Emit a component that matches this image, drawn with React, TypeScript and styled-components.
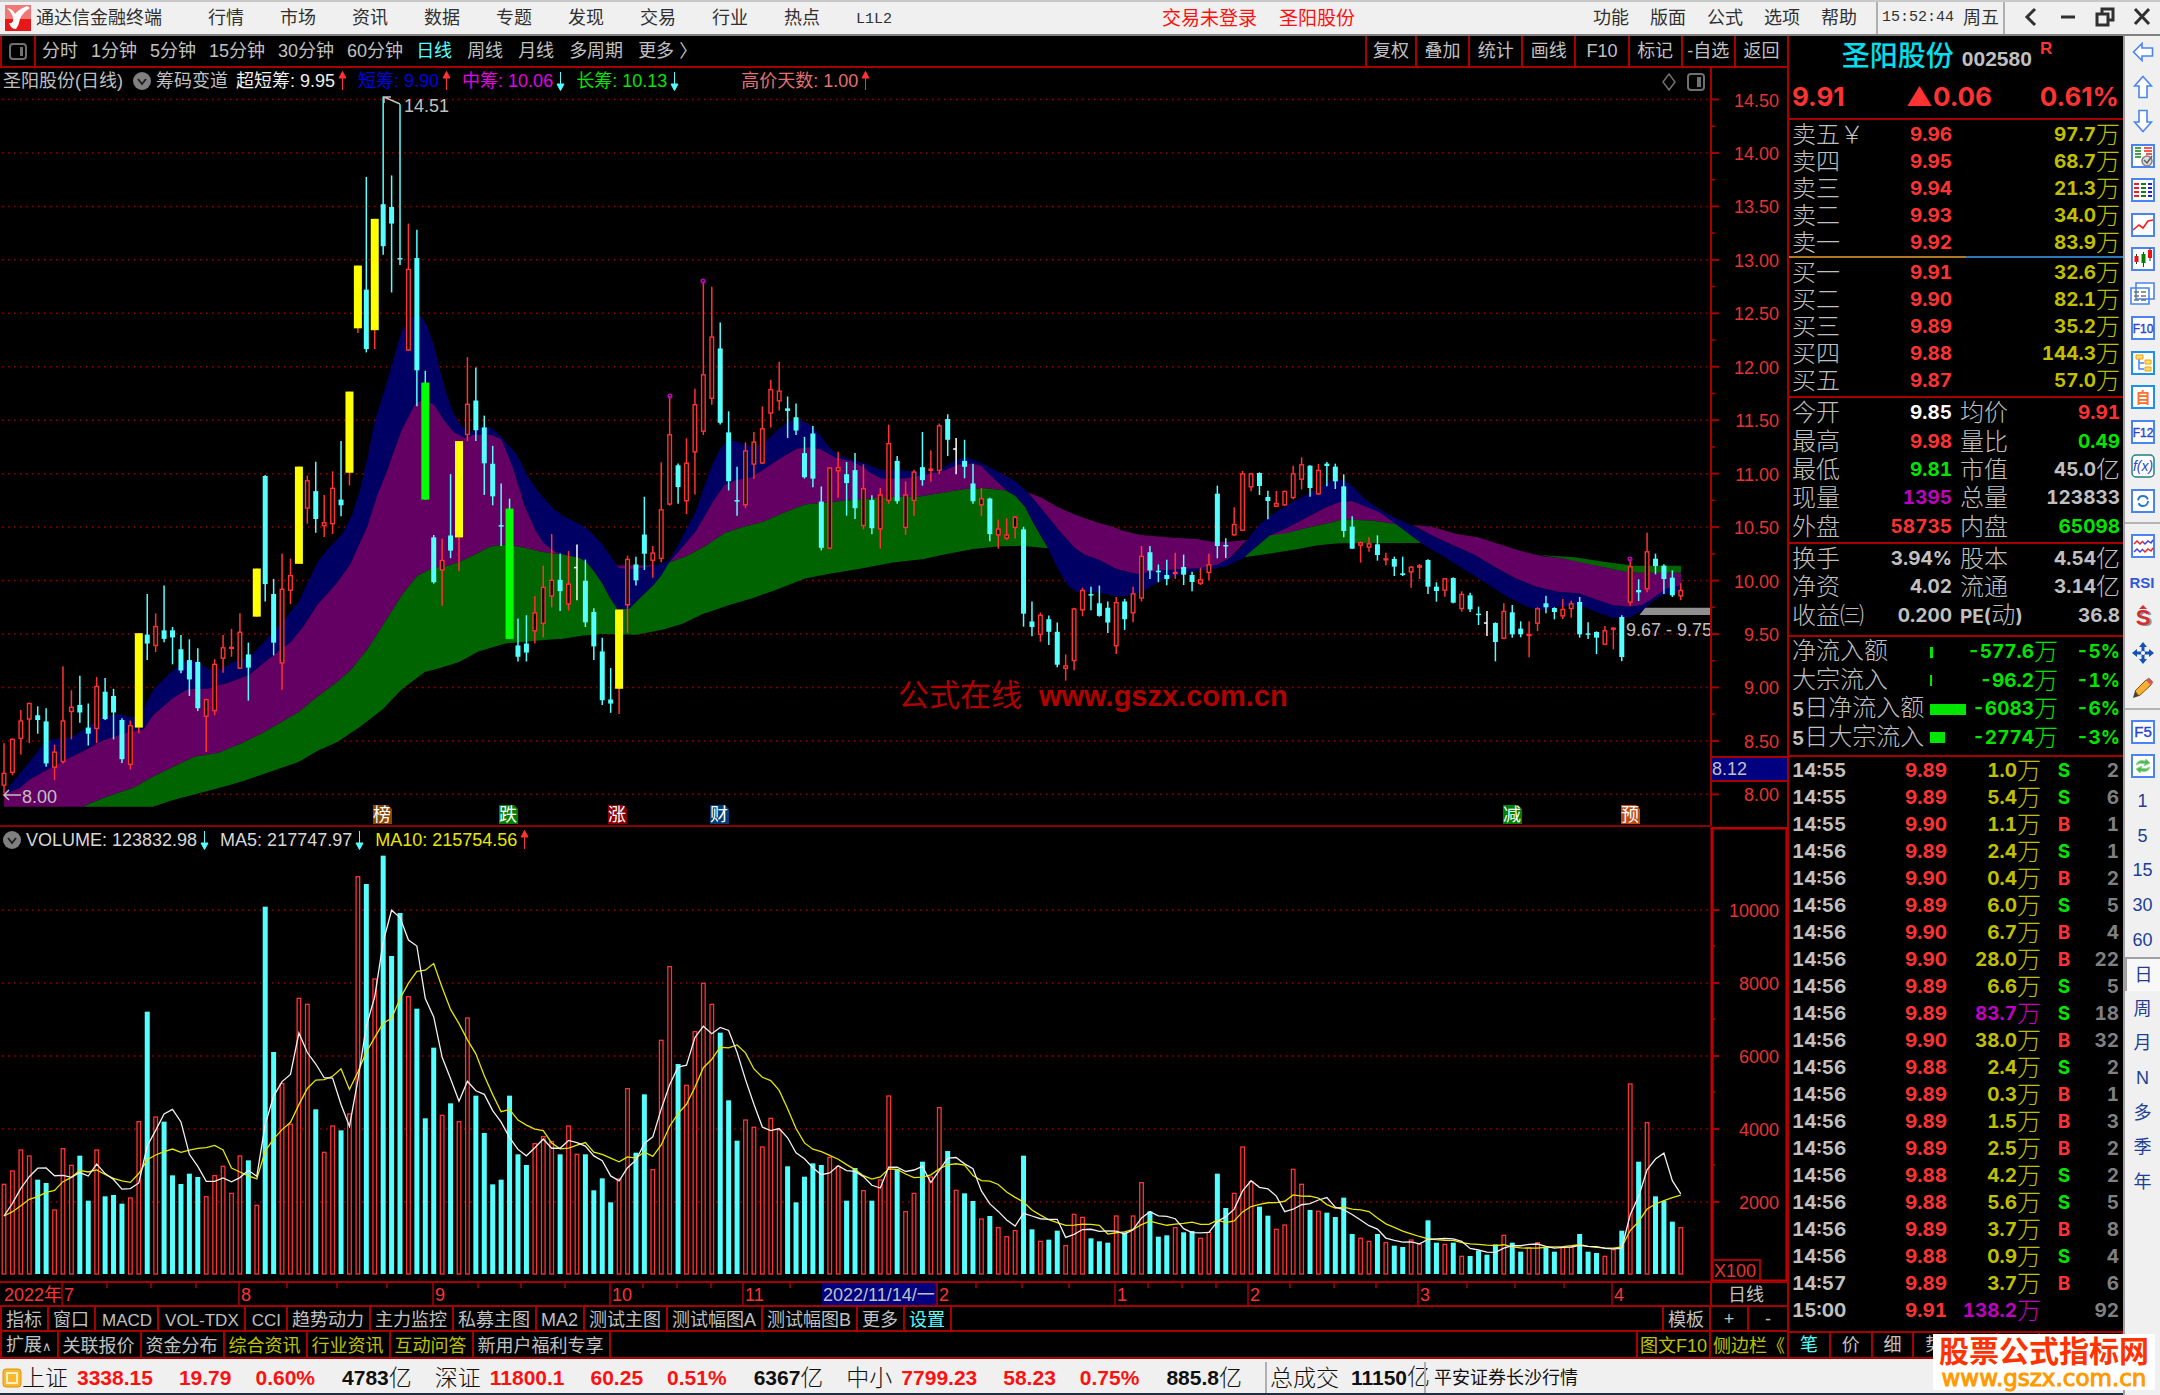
import React from 'react';
import styled, { createGlobalStyle } from 'styled-components';

const C = {
  line: '#a80000',
  grid: '#960000',
  red: '#ff3232',
  cyan: '#54ffff',
  green: '#00e600',
  text: '#c0c0c0',
  yellow: '#c0c000',
  magenta: '#c000c0',
  chrome: '#f0f0f0',
};
const SANS = '"Liberation Sans", "Noto Sans CJK SC", sans-serif';
const NUM = 'Inter, "Noto Sans CJK SC", sans-serif';

const Global = createGlobalStyle`
  *, *::before, *::after { box-sizing: border-box; }
  body { margin: 0; background: #000; font: 18px/1 ${SANS}; color: ${C.text}; }
  button { font: inherit; color: inherit; background: none; border: 0; padding: 0; margin: 0; cursor: pointer; white-space: nowrap; }
  h1 { margin: 0; }
`;

/* ---------- page frame ---------- */
const Page = styled.div`display: flex; flex-direction: column; min-height: 100vh; min-width: 1700px;`;
const Body = styled.div`display: flex; flex: 1;`;
const Desk = styled.div`flex: 1; min-width: 0; display: flex; flex-direction: column;`;
const Main = styled.div`display: grid; grid-template-columns: minmax(0, 1fr) 336px; flex: 1;`;
const Charts = styled.main`display: flex; flex-direction: column; min-width: 0;`;

/* ---------- menu bar ---------- */
const MenuBar = styled.header`
  display: flex; align-items: center; height: 36px; padding-left: 5px;
  background: ${C.chrome}; color: #303030; border-top: 2px solid #c8c8c8; border-bottom: 2px solid #808080;
`;
const AppName = styled.span`margin: 0 46px 0 5px;`;
const Menu = styled.nav<{ $gap: number }>`display: flex; gap: ${p => p.$gap}px;`;
const Mono = styled.span`font: 15px/18px "Liberation Mono", monospace;`;
const Notices = styled.div`flex: 1; display: flex; justify-content: center; gap: 22px; color: #ff1010; font-size: 19px; padding-left: 32px;`;
const Clock = styled.time`
  display: flex; align-items: center; gap: 9px; height: 32px; margin-left: 19px; padding: 0 4px;
  border-left: 2px solid #b0b0b0; border-right: 2px solid #b0b0b0;
`;
const WinButtons = styled.div`display: flex; width: 155px; justify-content: space-between; padding: 0 8px 0 16px;`;

/* ---------- toolbar ---------- */
const Toolbar = styled.div`display: flex; height: 32px; border-bottom: 2px solid ${C.line}; border-left: 2px solid ${C.line};`;
const PaneToggle = styled.button`width: 34px; border-right: 2px solid ${C.line}; display: grid; place-items: center;`;
const Periods = styled.div`display: flex; gap: 13px; padding-left: 6px;`;
const LongPeriods = styled(Periods)`gap: 15px; padding-left: 13px; flex: 1;`;
const Period = styled.button<{ $on?: boolean }>`color: ${p => (p.$on ? C.cyan : C.text)};`;
const Tools = styled.div`display: grid; grid-template-columns: 50px repeat(7, 1fr); width: 422px;`;
const Tool = styled.button`border-left: 2px solid ${C.line};`;

/* ---------- charts ---------- */
const Pane = styled.section`position: relative;`;
const Plot = styled.svg`display: block; width: 100%; height: auto; font: 18px ${SANS};`;
const Legend = styled.div`position: absolute; left: 3px; top: 2px; height: 22px; display: flex; align-items: center; white-space: pre;`;
const LegendItem = styled.span<{ $c: string; $gap: number }>`
  color: ${p => p.$c}; display: flex; align-items: center; gap: 3px; margin-right: ${p => p.$gap}px;
`;

/* ---------- bottom tabs ---------- */
const TabRow = styled.div<{ $h: number }>`display: flex; height: ${p => p.$h}px; border-bottom: 2px solid ${C.line}; border-left: 2px solid ${C.line};`;
const Tab = styled.button<{ $c?: string }>`
  padding: 2px 5px 0 4px; color: ${p => p.$c || C.text}; border-right: 2px solid ${C.line};
`;
const Latin = styled.span`font-size: 17px; padding-left: 2px;`;
const Caret = styled.span`font: 13px/18px "DejaVu Sans", sans-serif;`;
const Spacer = styled.div`flex: 1; border-right: 2px solid ${C.line};`;
const ZoomIn = styled(Tab)`width: 38px; padding: 0;`;
const ZoomOut = styled(ZoomIn)`border-right: 0;`;
const Info = styled(Tab)`padding: 2px 2px 0;`;
const SideTab = styled(Tab)`width: 76px; padding: 2px 0 0; border-right: 0;`;

/* ---------- quote panel ---------- */
const Panel = styled.aside`
  border-left: 2px solid ${C.line}; display: flex; flex-direction: column;
  font: bold 19px/20px ${NUM}; font-variant-numeric: tabular-nums;
`;
const Title = styled.div`display: flex; justify-content: center; align-items: center; height: 42px; gap: 8px; padding: 0 22px 0 4px;`;
const Name = styled.h1`font: 500 28px/30px ${SANS}; color: #00e0f0;`;
const Code = styled.span`font: bold 21px/24px ${SANS}; padding-top: 4px;`;
const Flag = styled.sup`font: bold 17px/18px ${SANS}; color: ${C.red}; align-self: flex-start; padding-top: 4px; vertical-align: baseline;`;
const Last = styled.div`
  display: grid; grid-template-columns: 1fr auto 127px; align-items: center; height: 42px; padding: 0 4px 2px 3px;
  font: bold 26px/30px ${NUM}; color: ${C.red}; border-bottom: 2px solid ${C.line};
`;
const Percent = styled.span`text-align: right;`;
const Section = styled.section<{ $h: number; $foot: number }>`
  height: ${p => p.$h}px; padding: 1px 3px ${p => p.$foot}px; display: grid; grid-auto-rows: 1fr; border-bottom: 2px solid ${C.line};
`;
const Side = styled.section`padding: 1px 3px 0; display: grid; grid-auto-rows: 27px;`;
const Bids = styled(Side)`padding-bottom: 2px; border-bottom: 2px solid ${C.line};`;
const Ratio = styled.div`height: 2px; background: linear-gradient(90deg, #b07820 53%, #2f78b8 53%);`;
const QuoteRow = styled.div`display: grid; grid-template-columns: 80px 80px 1fr; align-items: center; text-align: right; white-space: nowrap;`;
const StatRow = styled.div`display: grid; grid-template-columns: 80px 80px 76px 1fr; align-items: center; text-align: right; white-space: nowrap;`;
const Label = styled.span<{ $pad?: boolean }>`font-weight: 300; font-size: 24px; line-height: 26px; text-align: left; padding-left: ${p => (p.$pad ? 8 : 0)}px;`;
const B = styled.b`font-weight: bold; font-size: 19px;`;
const Unit = styled.span`font-weight: 300; font-size: 24px; line-height: 26px;`;
const Val = styled.span<{ $c?: string; $mid?: boolean }>`
  color: ${p => p.$c || C.text}; display: flex; align-items: center; justify-content: ${p => (p.$mid ? 'center' : 'flex-end')};
`;
const FundRow = styled.div`display: grid; grid-template-columns: 138px 36px 1fr 62px; align-items: center; white-space: nowrap;`;
const FlowBar = styled.i`display: block; height: 11px; background: ${C.green};`;
const Ticks = styled.table`
  border-collapse: collapse; width: 100%; table-layout: fixed;
  td { padding: 0; height: 27px; text-align: right; white-space: nowrap; }
  td:first-child { text-align: left; padding-left: 3px; }
  td:last-child { padding-right: 4px; color: #808080; }
`;
const PanelTabs = styled.div`
  margin-top: auto; display: grid; grid-template-columns: repeat(8, 1fr); height: 28px;
  font: 18px/1 ${SANS}; border-top: 2px solid ${C.line}; border-bottom: 2px solid ${C.line};
`;
const PanelTab = styled.div<{ $on?: boolean }>`
  display: grid; place-items: center; border-right: 2px solid ${C.line}; color: ${p => (p.$on ? C.cyan : C.text)};
`;

/* ---------- status bar ---------- */
const Status = styled.footer`
  display: flex; align-items: center; height: 36px; padding: 3px 0 0 2px; background: ${C.chrome}; color: #101010;
  border-bottom: 2px solid #203040; font: bold 21px/24px ${SANS}; white-space: nowrap;
`;
const Index = styled.div`display: flex; align-items: center; margin-right: 23px;`;
const Thin = styled.span`font-weight: 300; font-size: 23px;`;
const Up = styled.span<{ $gap: number }>`color: #ff1010; margin-left: ${p => p.$gap}px;`;
const Amount = styled.span`margin-left: 27px; display: flex; align-items: center;`;
const Total = styled.div`border-left: 2px solid #b0b0b0; padding-left: 3px; display: flex; align-items: center; height: 31px; gap: 12px;`;
const Broker = styled.div`font-weight: 400; font-size: 18px; margin-left: -6px; padding-left: 8px; height: 31px; display: flex; align-items: center; border-left: 2px solid #b0b0b0;`;

/* ---------- icon strip ---------- */
const Strip = styled.nav`width: 37px; background: ${C.chrome}; border-left: 2px solid #a0a0a0; color: #1c3f94; font-size: 18px;`;
const IconGroup = styled.div<{ $h: number }>`
  height: ${p => p.$h}px; display: grid; grid-auto-rows: 1fr; justify-items: center; align-items: start; padding-bottom: 3px;
  & + & { border-top: 2px solid #b4b4b4; padding: 6px 0 0; }
`;
const IconButton = styled.button`display: grid; place-items: center; width: 35px; height: 32px;`;
const PeriodList = styled.div`display: grid; grid-template-rows: repeat(12, 1fr); height: 415px;`;
const StripText = styled.button<{ $on?: boolean }>`
  background: ${p => (p.$on ? '#f8f8f8' : 'none')}; border: 0 solid #a0a0a0; border-width: ${p => (p.$on ? '2px 0 0 2px' : '0')};
`;
const Stamp = styled.a`
  position: absolute; right: 5px; bottom: 5px; width: 222px; height: 56px; padding-top: 2px; background: #fff; text-align: center; text-decoration: none;
  font: bold 30px/32px ${SANS}; color: #ff3300; white-space: nowrap;
`;
const StampUrl = styled.span`display: block; font: 23px/20px "DejaVu Sans", sans-serif; color: #ff9a00; -webkit-text-stroke: 1px #ff9a00;`;
const Root = styled.div`position: relative;`;

/* ---------- session data ---------- */
/* Each block carries its own vertical origin and scale: y = y0 + v / k. */
type Block = { y0: number; k: number; rows: string };
const BLOCKS: Block[] = [
  { y0: 90, k: 2.119, rows: `r1384,1447,1474,1490 r1374,1375,1447,1452 r1314,1336,1375,1408 r1298,1299,1334,1384 c1306,1325,1335,1364
c1310,1338,1427,1434 r1387,1402,1436,1462 r1221,1336,1424,1427 r1272,1307,1318,1376 c1241,1303,1319,1341 c1300,1351,1364,1389
r1244,1263,1354,1384 c1246,1275,1333,1335 c1269,1284,1319,1376 c1331,1335,1418,1426 r1336,1346,1430,1440 y1151,1151,1351,1363
c1068,1154,1173,1208 r1109,1136,1178,1191 c1050,1145,1163,1170 c1138,1145,1160,1217 c1155,1185,1230,1236 c1164,1208,1249,1284
c1183,1212,1310,1316 r1290,1291,1328,1403 r1206,1216,1316,1325 r1155,1181,1205,1235 r1142,1180,1184,1201 r1109,1148,1226,1227
c1171,1196,1224,1294 y1014,1014,1116,1116 c816,818,1047,1084 c1036,1068,1171,1198 r982,1057,1215,1271 r993,1028,1061,1089
y798,798,1004,1004 r817,827,887,919 c788,850,909,938 r858,916,924,947 r808,843,920,941 c744,868,880,903 y639,639,811,838
y372,372,505,515 c184,423,549,556 y273,273,509,549 c14,242,331,349 c181,248,283,429 c30,356,359,371 r283,379,552,553
c296,356,594,670 g595,620,868,868 c943,948,1043,1046 r951,996,1018,1093 c814,944,976,992 y744,744,948,1020 r566,665,731,744
c588,658,721,744 c690,715,791,858 c754,792,861,880 c834,922,924,966 g866,887,1163,1163 c1120,1177,1201,1211 c1113,1173,1192,1211
r1072,1107,1147,1173 r1008,1053,1131,1160 r941,1038,1073,1096 c982,1038,1062,1104 r977,1046,1090,1103 w963,1012,1014,1081
c995,1040,1128,1138 c1098,1106,1179,1208` },
  { y0: 250, k: 2.703, rows: `c1048,1085,1217,1230 c1130,1215,1226,1251 y972,972,1186,1254 r826,835,960,1035 c829,850,893,907 c667,769,821,865
r800,818,840,886 r574,701,835,844 r395,498,688,691 c577,582,641,686 r509,575,679,714 r375,417,547,661 r85,336,491,500
r99,234,402,418 c196,266,467,472 c436,493,625,650 c586,676,679,718 r520,542,690,698 r492,518,580,618 r423,482,577,578
r351,376,442,480 r302,380,409,434 c396,428,435,508 c415,452,488,500 c505,549,614,618 c476,496,618,641 c639,680,805,812
r587,588,807,809 r545,587,598,670 c573,606,630,718 c549,595,698,727 r579,644,746,755 c663,676,752,768 r643,661,755,807
r472,522,678,686 c557,570,679,686 r626,661,751,770 r594,599,678,718 c492,587,622,637 r541,591,597,626 r469,474,597,606
c444,457,513,557 w508,538,541,606 c513,570,586,617 c578,631,679,686 r643,671,690,719 c670,672,768,787 r729,753,771,807
r725,769,780,784 r720,721,751,780 c748,755,983,1018 c950,1004,1019,1044 r980,986,1040,1059 c988,998,1032,1068
c1007,1032,1121,1128 r1093,1123,1132,1164 r967,969,1111,1136 r913,919,974,990 c910,930,934,974 c907,955,989,991
c950,967,1007,1035 r938,952,1071,1092 c943,950,998,1027 r910,928,982,1006 r800,827,942,950 c800,817,866,889 c850,867,870,898` },
  { y0: 420, k: 3, rows: `c419,465,477,496 r398,456,461,476 c404,441,464,495 c455,465,486,514 r443,478,491,495 r401,433,459,481
c197,221,378,415 c355,375,378,414 r262,312,346,347 r153,160,332,333 r158,160,202,214 c157,159,198,225 c212,231,243,298
r213,249,260,261 r212,213,256,257 r137,160,234,238 r112,133,179,208 c136,137,204,230 r132,150,223,224 c126,131,138,199
c131,140,184,207 c163,199,333,352 c289,320,386,387 r364,367,377,428 r352,370,383,395 c346,373,405,422 r398,415,421,436
c410,417,440,468 c410,460,465,468 r438,440,457,503 r432,436,443,477 c418,420,500,522 c487,500,513,545 r474,475,512,530
c472,474,548,550 r514,522,567,575 c518,526,568,576 c560,581,584,615 w573,609,612,648 c607,609,666,724 r550,573,656,658
c555,577,643,653 c604,626,643,652 r604,642,648,712 r562,565,611,633 c527,550,562,580 c562,564,576,598 r537,567,589,597
r542,550,567,593 c531,546,643,653 c607,640,643,657 c634,636,653,702 r618,631,674,676 r622,623,629,688 c586,591,711,724
r418,439,548,557 c478,510,517,543 r338,394,508,517 c401,416,438,463 c433,437,477,522 c451,473,526,531 r490,510,529,540` },
];
const CANDLES = BLOCKS.flatMap(b =>
  b.rows.split(/\s+/).map(s => ({ kind: s[0], y: s.slice(1).split(',').map(v => b.y0 + Number(v) / b.k) })),
);
const STEP = 8.426;
const cx = (i: number) => 4 + i * STEP;

/* Volume bar tops, in thirds of a pixel below y = 820. */
const VOL = `1093 1053 990 1008 1079 1089 1170 986 1036 1007 1142 990 1129 1125 1151 1134 905 575 891 905 1066 1092 1061 1071 1130
1067 1039 1120 1008 1021 1156 260 696 791 913 535 553 868 997 918 931 882 170 192 477 107 408 279 530 566 895 683 886 850 905 594
827 939 1093 1079 827 1003 1035 971 950 965 1003 918 1003 1003 1111 1075 1147 1077 806 998 823 1049 661 440 732 796 635 490 553
638 841 962 900 922 981 895 930 1039 1147 1070 1030 1035 1012 1039 1142 1044 1112 1142 1080 828 1047 1175 1120 1025 1071 863 993
1111 1120 1143 1197 1188 1223 1250 1232 1007 1228 1264 1259 1232 1277 1183 1192 1255 1264 1268 1188 1237 1188 1088 1174 1250 1246
1223 1237 1233 1255 1237 1061 1164 1120 981 1085 1160 1187 1228 1215 1048 1093 1170 1174 1178 1191 1133 1242 1255 1264 1242 1268
1277 1281 1260 1273 1201 1268 1273 1268 1309 1308 1292 1304 1273 1246 1268 1295 1283 1268 1281 1295 1283 1281 1242 1295 1299 1309
1289 1232 792 1025 908 1129 1143 1205 1223`.split(/\s+/).map(Number);
const BASE = 1274;
const vy = (v: number) => 820 + v / 3;
const movingAverage = (n: number, lead: number[]) =>
  VOL.map((_, i) => {
    const v = i < n - 1 ? lead[i] : VOL.slice(i - n + 1, i + 1).reduce((a, b) => a + b, 0) / n;
    return `${cx(i)},${vy(v)}`;
  }).join(' ');
const MA5 = movingAverage(5, [1188, 1150, 1105, 1070]);
const MA10 = movingAverage(10, [1188, 1175, 1157, 1138, 1130, 1117, 1111, 1085, 1072]);

/* Cost bands, stored per block: x = x0 + u / kx, y = y0 + v / ky. */
const BLUE = '#000064', PURPLE = '#640064', GREEN = '#006400';
type Area = [number, string, string];
const FRAMES = [[0, 90, 2.613, 2.119], [560, 250, 2.613, 2.703], [1120, 420, 2.376, 3]];
const A0 = '10,1490 60,1440 100,1400 120,1380 150,1374 185,1372 230,1350 270,1328 310,1322 345,1330 372,1315 400,1272 440,1238 480,1212 515,1210 545,1228 575,1228 610,1212 650,1203 690,1170 740,1125 780,1085 830,1000 860,970 895,940 920,900 940,850 960,780 980,700 1005,635 1030,565 1050,510 1075,482 1100,480 1115,498 1135,545 1150,595 1165,640 1185,685 1205,712 1230,725 1260,714 1285,716 1310,735 1350,772 1380,820 1410,855 1450,890 1464,897';
const B0 = '10,1492 50,1480 80,1460 130,1438 170,1420 220,1400 270,1378 330,1362 375,1355 400,1325 450,1290 490,1270 545,1268 600,1255 650,1240 700,1207 760,1170 790,1140 830,1090 880,1045 915,1005 960,925 985,860 1010,810 1050,720 1085,665 1110,655 1135,668 1160,700 1185,725 1215,738 1240,730 1280,730 1310,740 1340,800 1370,880 1400,935 1420,960 1440,973 1464,984';
const C0 = '215,1519 270,1500 350,1478 400,1455 450,1435 510,1412 570,1405 630,1385 680,1365 730,1342 780,1318 830,1285 880,1255 915,1230 960,1185 1000,1135 1050,1070 1090,1030 1130,1013 1170,1008 1200,1000 1240,985 1280,968 1320,963 1370,970 1410,978 1464,984';
const D0 = '400,1519 450,1505 520,1490 600,1473 640,1463 700,1446 780,1424 830,1400 880,1382 940,1350 1000,1312 1050,1270 1110,1233 1150,1225 1200,1212 1250,1190 1320,1173 1400,1167 1464,1163';
const B1 = '285,845 310,815 355,760 400,680 430,635 460,622 500,615 530,595 580,560 620,537 650,533 680,538 720,562 760,570 790,585 815,605 840,618 900,618 940,610 1000,598 1040,580 1075,577 1100,583 1130,615 1165,648';
const C1 = '285,845 330,828 380,800 430,765 480,748 530,735 580,712 640,688 700,682 780,674 860,668 940,666 1000,656 1060,646 1110,644 1165,650';
const DIP1 = '0,822 50,832 70,845 90,870 110,900 130,940 150,970 180,970 210,940 245,905 265,880';
const TAIL1 = '1190,665 1215,695 1240,745 1275,806';
const flip = (s: string) => s.split(' ').reverse().join(' ');
const AREAS: Area[] = [
  [0, BLUE, `${A0} ${flip(B0)}`],
  [0, PURPLE, `${B0} ${flip(C0)} 10,1519`],
  [0, GREEN, `${C0} ${flip(D0)}`],
  [1, BLUE, `0,715 40,735 70,752 110,795 150,855 200,862 265,848 285,838 305,805 330,755 355,705 380,630 400,575 420,535 440,515 460,517 490,530 520,530 545,510 570,485 600,462 625,458 650,470 680,500 700,530 725,553 760,566 800,578 835,594 900,596 940,600 985,598 1010,583 1035,568 1060,560 1100,575 1150,602 1190,625 1215,648 1235,670 1275,720 1310,765 1345,805 1370,823 1410,838 1450,860 1464,865 1464,937 1450,935 1400,925 1350,925 1325,905 1300,860 ${flip(TAIL1)} ${flip(B1)} ${flip(DIP1)}`],
  [1, PURPLE, '135,835 150,853 245,852 265,848 200,862 155,860'],
  [1, PURPLE, `${B1} ${flip(C1)}`],
  [1, GREEN, `${DIP1} ${C1} ${TAIL1} 1210,800 1150,801 1080,808 1010,822 950,835 870,845 780,862 700,876 640,888 560,920 500,942 440,960 370,985 320,1010 270,1026 200,1040 110,1038 60,1042 0,1052`],
  [1, PURPLE, '1222,655 1260,670 1300,695 1350,717 1400,735 1450,750 1464,756 1464,865 1450,860 1410,838 1370,823 1345,805 1310,765 1275,720 1235,670'],
  [2, PURPLE, '0,330 50,345 110,352 180,357 220,365 260,365 302,359 260,415 230,435 190,445 150,447 110,450 60,458 40,462 0,450'],
  [2, BLUE, '0,450 40,462 60,458 110,450 150,447 190,445 230,435 260,415 290,380 305,355 330,315 360,285 410,245 450,220 490,190 515,178 535,182 555,202 580,235 610,262 640,285 690,315 740,345 790,375 840,403 890,440 940,475 990,500 1040,515 1090,520 1130,538 1170,555 1210,560 1240,555 1260,540 1300,505 1333,495 1333,517 1300,520 1270,540 1240,572 1210,593 1170,593 1130,575 1090,555 1040,562 1000,570 970,562 920,530 870,490 820,450 770,410 715,370 670,335 640,300 615,278 580,258 550,243 520,247 490,262 440,295 400,322 350,352 320,385 295,412 275,425 250,440 220,447 170,455 130,468 90,487 60,510 30,525 0,530'],
  [2, PURPLE, '350,350 400,322 440,295 490,262 520,247 550,243 580,258 615,276 655,312 600,302 530,298 500,308 440,325 400,338'],
  [2, GREEN, '295,412 320,385 355,347 400,338 440,325 500,308 530,298 600,302 655,312 690,345 715,369 520,370 470,376 420,388 360,400'],
  [2, PURPLE, '695,315 740,320 800,342 850,352 900,372 950,392 1000,408 1050,415 1100,425 1150,442 1200,455 1230,458 1333,458 1333,495 1300,505 1260,540 1240,555 1210,560 1170,555 1130,538 1090,520 1040,515 990,500 940,475 890,440 840,403 790,375 740,345'],
  [2, GREEN, '995,405 1080,412 1150,425 1220,437 1333,437 1333,458 1230,458 1200,455 1150,442 1100,428 1050,415'],
  [2, '#909090', '1248,563 1402,563 1402,585 1234,585'],
];
const place = (f: number, s: string) => {
  const [x0, y0, kx, ky] = FRAMES[f];
  return s.split(' ').map(p => {
    const [u, v] = p.split(',').map(Number);
    return `${(x0 + u / kx).toFixed(1)},${(y0 + v / ky).toFixed(1)}`;
  }).join(' ');
};

const PRICES = Array.from({ length: 14 }, (_, i) => 14.5 - i / 2);
const py = (p: number) => 99.5 + (14.5 - p) * 106.9;
const FILL: Record<string, string> = { r: C.red, c: C.cyan, y: '#ffff00', g: '#00ff00', w: '#ffffff' };

const Candle = ({ i, kind, y }: { i: number; kind: string; y: number[] }) => {
  const x = cx(i);
  const [hi, top, bot, lo] = y;
  const wick = kind === 'y' ? C.red : kind === 'g' ? C.cyan : FILL[kind];
  const wide = kind === 'y' || kind === 'g';
  return (
    <g>
      <line x1={x} x2={x} y1={hi} y2={lo} stroke={wick} strokeWidth={1.5} />
      {kind === 'r'
        ? <rect x={x - 1.8} y={top + 0.5} width={3.6} height={Math.max(bot - top - 1, 1)} fill="#000" stroke={C.red} strokeWidth={1.4} />
        : kind === 'w'
          ? <line x1={x - 3} x2={x} y1={top} y2={top} stroke="#fff" strokeWidth={1.5} />
          : <rect x={x - (wide ? 4 : 2.5)} y={top} width={wide ? 8 : 5} height={Math.max(bot - top, 1.5)} fill={FILL[kind]} />}
    </g>
  );
};

const EVENTS: [string, number, string][] = [
  ['榜', 382, '#8b4500'], ['跌', 508, '#008000'], ['涨', 617, '#8b0000'], ['财', 719, '#003c78'], ['减', 1512, '#008000'], ['预', 1630, '#c04a10'],
];
const PEAKS = [[670, 400], [703, 281], [1630, 559]];

const PriceChart = () => (
  <Plot viewBox="0 68 1787 759">
    {PRICES.map(p => (
      <g key={p}>
        <line x1={2} x2={1711} y1={py(p)} y2={py(p)} stroke={C.grid} strokeWidth={1.5} strokeDasharray="1.5 4.5" />
        <line x1={1711} x2={1719} y1={py(p)} y2={py(p)} stroke={C.line} strokeWidth={2} />
        {p > 8 && <line x1={1711} x2={1715} y1={py(p - 0.25)} y2={py(p - 0.25)} stroke={C.line} strokeWidth={1.5} />}
        <text x={1779} y={py(p) + 7} textAnchor="end" fill="#e63232">{p.toFixed(2)}</text>
      </g>
    ))}
    {AREAS.map(([f, fill, s], i) => <polygon key={i} points={place(f, s)} fill={fill} />)}
    {CANDLES.map((c, i) => <Candle key={i} i={i} kind={c.kind} y={c.y} />)}
    {PEAKS.map(([x, y]) => <circle key={x} cx={x} cy={y - 4 * Number(x === 670)} r={1.8} fill="none" stroke={C.magenta} strokeWidth={1.5} />)}
    <path d="M400 104 L384 97 M384 103 V97 H391" fill="none" stroke={C.text} strokeWidth={1.5} />
    <text x={404} y={112} fill={C.text}>14.51</text>
    <path d="M21 795 H4 M9 790 L4 795 L9 800" fill="none" stroke={C.text} strokeWidth={1.5} />
    <text x={22} y={803} fill={C.text}>8.00</text>
    <svg x={1620} y={610} width={90} height={34}><text x={6} y={26} fill={C.text}>9.67 - 9.75</text></svg>
    <text x={898} y={706} fill="#b00000" fontSize={31} fontFamily='"Noto Sans CJK SC", sans-serif'>公式在线</text>
    <text x={1039} y={706} fill="#b00000" fontSize={29} fontWeight="bold">www.gszx.com.cn</text>
    {EVENTS.map(([t, x, fill]) => (
      <g key={t}>
        <path d={`M${x - 9} 805 h15 l4 4 v15 h-19 z`} fill={fill} />
        <text x={x} y={821} textAnchor="middle" fill="#fff" fontSize={18}>{t}</text>
      </g>
    ))}
    <path d="M1711 68 V826" stroke={C.line} strokeWidth={2} />
    <rect x={1711} y={757} width={77} height={24} fill="#000080" stroke={C.line} strokeWidth={2} />
    <text x={1712} y={775} fill={C.text}>8.12</text>
    <path d="M0 826 H1711" stroke="#8a0000" strokeWidth={2} />
    <path d="M1663 82 l6 -8 6 8 -6 8z" fill="none" stroke="#707070" strokeWidth={1.5} />
    <rect x={1688} y={74} width={16} height={16} rx={3} fill="none" stroke="#707070" strokeWidth={2} />
    <rect x={1697} y={77} width={4} height={10} fill="#707070" />
  </Plot>
);

const VolumeChart = () => (
  <Plot viewBox="0 827 1787 456">
    {[10000, 8000, 6000, 4000, 2000].map((v, i) => {
      const y = 910 + i * 73;
      return (
        <g key={v}>
          <line x1={2} x2={1711} y1={y} y2={y} stroke={C.grid} strokeWidth={1.5} strokeDasharray="1.5 4.5" />
          <line x1={1711} x2={1719} y1={y} y2={y} stroke={C.line} strokeWidth={2} />
          {v > 2000 && <line x1={1711} x2={1715} y1={y + 36} y2={y + 36} stroke={C.line} strokeWidth={1.5} />}
          <text x={1779} y={y + 7} textAnchor="end" fill="#e63232">{v}</text>
        </g>
      );
    })}
    {VOL.map((v, i) => {
      const up = 'ryw'.includes(CANDLES[i].kind) && i !== 176;
      return up
        ? <rect key={i} x={cx(i) - 1.8} y={vy(v)} width={3.6} height={BASE - vy(v)} fill="#000" stroke={C.red} strokeWidth={1.3} />
        : <rect key={i} x={cx(i) - 2.5} y={vy(v)} width={5} height={BASE - vy(v)} fill={C.cyan} />;
    })}
    <polyline points={MA10} fill="none" stroke="#e6e600" strokeWidth={1.3} />
    <polyline points={MA5} fill="none" stroke="#f0f0f0" strokeWidth={1.3} />
    <rect x={1712} y={828} width={75} height={453} fill="none" stroke="#c00000" strokeWidth={3} />
    <path d="M1712 1260 H1760 V1281" fill="none" stroke={C.line} strokeWidth={2} />
    <text x={1714} y={1277} fill="#e63232">X100</text>
    <path d="M0 1282 H1787" stroke={C.line} strokeWidth={2} />
  </Plot>
);

const MONTHS: [number, string][] = [[62, '7'], [239, '8'], [433, '9'], [610, '10'], [743, '11'], [937, '2'], [1115, '1'], [1248, '2'], [1418, '3'], [1612, '4']];
const WEEKS = [107, 151, 196, 287, 337, 387, 478, 521, 565, 643, 677, 711, 790, 976, 1022, 1069, 1148, 1182, 1216, 1290, 1334, 1376, 1467, 1515, 1564];
const DateAxis = () => (
  <Plot viewBox="0 1283 1787 24">
    <text x={4} y={1301} fill={C.red}>2022年</text>
    <rect x={822} y={1283} width={115} height={22} fill="#000080" />
    <text x={823} y={1301} fill={C.text}>2022/11/14/一</text>
    {WEEKS.map(x => <line key={x} x1={x} x2={x} y1={1283} y2={1288} stroke={C.line} strokeWidth={1.5} />)}
    {MONTHS.map(([x, t]) => (
      <g key={x}>
        <line x1={x} x2={x} y1={1283} y2={1306} stroke={C.line} strokeWidth={1.5} />
        <text x={x + 2} y={1301} fill={C.red}>{t}</text>
      </g>
    ))}
    <path d="M0 1306 H1787 M1711 1283 V1306" stroke={C.line} strokeWidth={2} />
    <text x={1746} y={1301} textAnchor="middle" fill={C.text}>日线</text>
  </Plot>
);

/* ---------- small drawings ---------- */
const Arrow = ({ down }: { down?: boolean }) => (
  <svg width="9" height="20" viewBox="0 0 9 20">
    {down
      ? <path d="M4.5 1 V14 M1 13 H8 L4.500 19.500Z" stroke={C.cyan} fill={C.cyan} />
      : <path d="M4.5 19 V6 M1 7 H8 L4.500 0.500Z" stroke={C.red} fill={C.red} />}
  </svg>
);
const Drop = () => (
  <svg width="18" height="18" viewBox="0 0 18 18">
    <circle cx="9" cy="9" r="9" fill="#808080" />
    <path d="M5 7 L9 12 L13 7" fill="none" stroke="#202020" strokeWidth="2" />
  </svg>
);
const Box = ({ children, c = '#4a84f0' }: { children?: React.ReactNode; c?: string }) => (
  <svg width="24" height="24" viewBox="0 0 24 24">
    <rect x="1" y="1" width="22" height="22" fill="#fff" stroke={c} strokeWidth="2" />
    {children}
  </svg>
);
const dashes = (x: number, c: string, w = 5) => <path d={`M${x} 6h${w} M${x} 10h${w} M${x} 14h${w} M${x} 18h${w}`} stroke={c} strokeWidth="2" />;
const BoxText = ({ t, s = 12 }: { t: string; s?: number }) => (
  <Box><text x="12" y="17" textAnchor="middle" fontSize={s} fontFamily="Liberation Sans" fill="#2846d0" stroke="#2846d0" strokeWidth=".4">{t}</text></Box>
);
type IconItem = [string, React.ReactNode];
const ICONS_TOP: IconItem[] = [
  ['后退', <svg width="22" height="20" viewBox="0 0 22 20"><path d="M1.500 10 L10 1.500 V6 H20.500 V14 H10 V18.500Z" fill="#fff" stroke="#4a84f0" strokeWidth="1.600" /></svg>],
  ['向上', <svg width="20" height="24" viewBox="0 0 20 24"><path d="M10 1.500 L18.500 11 H14 V22.500 H6 V11 H1.500Z" fill="#fff" stroke="#4a84f0" strokeWidth="1.600" /></svg>],
  ['向下', <svg width="20" height="24" viewBox="0 0 20 24"><path d="M10 22.500 L18.500 13 H14 V1.500 H6 V13 H1.500Z" fill="#fff" stroke="#4a84f0" strokeWidth="1.600" /></svg>],
  ['报价设置', <Box><path d="M4 4h6 M4 7h6 M4 10h6 M4 13h6" stroke="#108010" strokeWidth="1.600" /><path d="M13 4h8 M13 7h8 M15 10h6" stroke="#f02020" strokeWidth="1.600" /><circle cx="16" cy="17" r="5" fill="#ddd" stroke="#808080" strokeWidth="1.500" /><path d="M13 16 L16 19 L21 12" fill="none" stroke="#606060" strokeWidth="1.500" /></Box>],
  ['报价列表', <Box>{dashes(3, '#f02020')}{dashes(10, '#108010')}{dashes(17, '#2020e0', 4)}</Box>],
  ['走势图', <Box><path d="M2 17 L8 12 L12 15 L17 8 L22 7" fill="none" stroke="#f02020" strokeWidth="1.600" /></Box>],
  ['K线图', <Box><path d="M5.500 7v10 M12.500 5v15 M19 1v13" stroke="#333" /><path d="M3.500 9h4v6h-4z M17 3h4v8h-4z" fill="#f01010" /><path d="M10.500 7h4v9h-4z" fill="#008000" /></Box>],
  ['多窗口', <svg width="25" height="23" viewBox="0 0 25 23"><path d="M6 1h18v16H6z M1 6h18v16H1z" fill="#fff" stroke="#4a84f0" strokeWidth="1.600" /><path d="M4 10h5 M11 10h5 M4 14h5 M11 14h5 M4 18h5 M11 18h5" stroke="#707070" strokeWidth="1.500" /></svg>],
  ['F10', <BoxText t="F10" />],
  ['板块树', <Box c="#1c90f0"><path d="M8 8v10h5 M8 12h5" fill="none" stroke="#4a84f0" strokeWidth="1.500" /><path d="M5 4h7v4H5z M14 9h6v4h-6z M14 16h6v4h-6z" fill="#ffe060" stroke="#f0a010" /></Box>],
  ['自选', <Box c="#1c90f0"><text x="12" y="18" textAnchor="middle" fontSize="15" fontWeight="bold" fill="#ff7030">自</text></Box>],
  ['F12', <BoxText t="F12" />],
  ['公式', <svg width="24" height="24" viewBox="0 0 24 24"><rect x="1" y="1" width="22" height="22" rx="4" fill="#fff" stroke="#208080" strokeWidth="1.500" /><text x="12" y="17" textAnchor="middle" fontSize="14" fontStyle="italic" fill="#2846d0">f(x)</text></svg>],
  ['循环', <Box><circle cx="12" cy="12" r="5" fill="none" stroke="#2878c8" strokeWidth="2" strokeDasharray="13 3" /></Box>],
];
const ICONS_MID: IconItem[] = [
  ['多周期图', <Box><path d="M3 10 L6 7 L9 10 L12 7" fill="none" stroke="#f02020" strokeWidth="1.500" /><path d="M12 8 L14 10 L17 7 L20 9 L22 6 M3 18 L6 15 L9 18 L12 15" fill="none" stroke="#4040e0" strokeWidth="1.500" /><path d="M12 16 L14 18 L17 15 L20 17 L22 14" fill="none" stroke="#f02020" strokeWidth="1.500" /></Box>],
  ['RSI', <svg width="26" height="20" viewBox="0 0 26 20"><text x="12" y="16" textAnchor="middle" fontSize="15" fontWeight="bold" fontFamily="Liberation Sans" fill="#3058d8">RSI</text></svg>],
  ['交易', <svg width="20" height="26" viewBox="0 0 20 26"><text x="12" y="22" textAnchor="middle" fontSize="22" fontWeight="bold" fill="#909090">S</text><text x="10" y="21" textAnchor="middle" fontSize="22" fontWeight="bold" fill="#d03030">S</text><path d="M6 5 L10 1 L14 5z" fill="#d03030" /></svg>],
  ['移动', <svg width="24" height="24" viewBox="0 0 24 24"><path d="M12 1 L16 6 H8z M12 23 L16 18 H8z M1 12 L6 8 V16z M23 12 L18 8 V16z" fill="#1450b8" /><path d="M12 5v14 M5 12h14" stroke="#1450b8" strokeWidth="3" /><circle cx="12" cy="12" r="2" fill="#fff" /></svg>],
  ['画笔', <svg width="24" height="24" viewBox="0 0 24 24"><path d="M2 22 L4 15 L8 20z" fill="#404040" /><path d="M4 15 L15 4 L20 9 L8 20z" fill="#f8b030" stroke="#805010" /><path d="M15 4 L18 2 L22 6 L20 9z" fill="#e05050" stroke="#a08080" /></svg>],
];
const ICONS_LOW: IconItem[] = [
  ['F5', <BoxText t="F5" s={15} />],
  ['刷新', <Box><path d="M5 11 Q7 5 14 7 L15 5 L19 9 L13 12 L14 10 Q9 8 5 11z M19 13 Q17 19 10 17 L9 19 L5 15 L11 12 L10 14 Q15 16 19 13z" fill="#50b850" stroke="#90d890" /></Box>],
];
const Icons = ({ items, h }: { items: IconItem[]; h: number }) => (
  <IconGroup $h={h}>{items.map(([t, icon]) => <IconButton key={t} aria-label={t}>{icon}</IconButton>)}</IconGroup>
);

/* ---------- quote rows ---------- */
const Figure = ({ t, c }: { t: string; c?: string }) => {
  const unit = /[万亿]$/.test(t) ? t.slice(-1) : '';
  return <Val $c={c}><B>{unit ? t.slice(0, -1) : t}</B>{unit && <Unit>{unit}</Unit>}</Val>;
};
const ASKS = [['卖五￥', '9.96', '97.7万'], ['卖四', '9.95', '68.7万'], ['卖三', '9.94', '21.3万'], ['卖二', '9.93', '34.0万'], ['卖一', '9.92', '83.9万']];
const BIDS = [['买一', '9.91', '32.6万'], ['买二', '9.90', '82.1万'], ['买三', '9.89', '35.2万'], ['买四', '9.88', '144.3万'], ['买五', '9.87', '57.0万']];
const quote = (r: string[]) => <QuoteRow key={r[0]}><Label>{r[0]}</Label><Figure t={r[1]} c={C.red} /><Figure t={r[2]} c={C.yellow} /></QuoteRow>;
const STATS = [
  ['今开', '9.85', '#fff', '均价', '9.91', C.red], ['最高', '9.98', C.red, '量比', '0.49', C.green], ['最低', '9.81', C.green, '市值', '45.0亿', C.text],
  ['现量', '1395', C.magenta, '总量', '123833', C.text], ['外盘', '58735', C.red, '内盘', '65098', C.green],
];
const RATIOS = [['换手', '3.94%', C.text, '股本', '4.54亿', C.text], ['净资', '4.02', C.text, '流通', '3.14亿', C.text], ['收益㈢', '0.200', C.text, 'PE(动)', '36.8', C.text]];
const stat = (r: string[]) => (
  <StatRow key={r[0]}>
    <Label>{r[0]}</Label><Figure t={r[1]} c={r[2]} />
    <Label $pad>{r[3].startsWith('PE') ? <><B>PE(</B>动<B>)</B></> : r[3]}</Label><Figure t={r[4]} c={r[5]} />
  </StatRow>
);
const FLOWS: [string, string, number, string, string][] = [
  ['', '净流入额', 3, '-577.6万', '-5%'], ['', '大宗流入', 2, '-96.2万', '-1%'], ['5', '日净流入额', 36, '-6083万', '-6%'], ['5', '日大宗流入', 15, '-2774万', '-3%'],
];
const TICKS = `14:55 9.89 1.0 S 2|14:55 9.89 5.4 S 6|14:55 9.90 1.1 B 1|14:56 9.89 2.4 S 1|14:56 9.90 0.4 B 2|14:56 9.89 6.0 S 5|14:56 9.90 6.7 B 4|14:56 9.90 28.0 B 22|14:56 9.89 6.6 S 5|14:56 9.89 83.7 S 18|14:56 9.90 38.0 B 32|14:56 9.88 2.4 S 2|14:56 9.89 0.3 B 1|14:56 9.89 1.5 B 3|14:56 9.89 2.5 B 2|14:56 9.88 4.2 S 2|14:56 9.88 5.6 S 5|14:56 9.89 3.7 B 8|14:56 9.88 0.9 S 4|14:57 9.89 3.7 B 6|15:00 9.91 138.2 - 92`
  .split('|').map(r => r.split(' '));
const INDICES = [
  ['上证', '3338.15', '19.79', '0.60%', '4783'], ['深证', '11800.1', '60.25', '0.51%', '6367'], ['中小', '7799.23', '58.23', '0.75%', '885.8'],
];
const stroke = { fill: 'none', stroke: '#303030', strokeWidth: 3 };

export default function App() {
  return (
    <Root>
      <Global />
      <Page>
        <MenuBar>
          <svg width="26" height="26" viewBox="0 0 26 26">
            <rect width="26" height="26" fill="#e81818" /><rect width="26" height="14" fill="#f07878" />
            <path d="M2 3 Q8 4 10 9 Q14 4 22 1 L25 3 Q17 8 15 14 Q14 20 11 24 Q6 24 4 18 Q9 19 8 13 Q7 8 2 3z" fill="#fff" />
          </svg>
          <AppName>通达信金融终端</AppName>
          <Menu $gap={36}>
            {['行情', '市场', '资讯', '数据', '专题', '发现', '交易', '行业', '热点'].map(t => <button key={t}>{t}</button>)}
            <button><Mono>L1L2</Mono></button>
          </Menu>
          <Notices><button>交易未登录</button><button>圣阳股份</button></Notices>
          <Menu $gap={21}>{['功能', '版面', '公式', '选项', '帮助'].map(t => <button key={t}>{t}</button>)}</Menu>
          <Clock><Mono>15:52:44</Mono>周五</Clock>
          <WinButtons>
            <button aria-label="收起"><svg width="20" height="20" viewBox="0 0 20 20"><path d="M14 2 L6 10 L14 18" {...stroke} /></svg></button>
            <button aria-label="最小化"><svg width="20" height="20" viewBox="0 0 20 20"><path d="M3 10H17" {...stroke} /></svg></button>
            <button aria-label="还原"><svg width="20" height="20" viewBox="0 0 20 20"><path d="M7 6V2H18V13H14 M2 7H13V18H2z" {...stroke} /></svg></button>
            <button aria-label="关闭"><svg width="20" height="20" viewBox="0 0 20 20"><path d="M3 2 L17 17 M17 2 L3 17" {...stroke} /></svg></button>
          </WinButtons>
        </MenuBar>
        <Body>
          <Desk>
            <Main>
              <Charts>
                <Toolbar>
                  <PaneToggle aria-label="侧栏">
                    <svg width="18" height="17" viewBox="0 0 18 17"><rect x="1" y="1" width="16" height="15" rx="3" fill="none" stroke="#707070" strokeWidth="2" /><path d="M11 4h3v9h-3z" fill="#707070" /></svg>
                  </PaneToggle>
                  <Periods>
                    {['分时', '1分钟', '5分钟', '15分钟', '30分钟', '60分钟'].map(t => <Period key={t}>{t}</Period>)}
                  </Periods>
                  <LongPeriods>
                    {['日线', '周线', '月线', '多周期', '更多 〉'].map(t => <Period key={t} $on={t === '日线'}>{t}</Period>)}
                  </LongPeriods>
                  <Tools>{['复权', '叠加', '统计', '画线', 'F10', '标记', '-自选', '返回'].map(t => <Tool key={t}>{t}</Tool>)}</Tools>
                </Toolbar>
                <Pane>
                  <PriceChart />
                  <Legend>
                    <LegendItem $c={C.text} $gap={10}>圣阳股份(日线)</LegendItem>
                    <LegendItem $c={C.text} $gap={5}><Drop /></LegendItem>
                    <LegendItem $c={C.text} $gap={8}>筹码变道</LegendItem>
                    <LegendItem $c="#f0f0f0" $gap={11}>超短筹: 9.95<Arrow /></LegendItem>
                    <LegendItem $c="#0000e6" $gap={11}>短筹: 9.90<Arrow /></LegendItem>
                    <LegendItem $c="#e600e6" $gap={11}>中筹: 10.06<Arrow down /></LegendItem>
                    <LegendItem $c={C.green} $gap={62}>长筹: 10.13<Arrow down /></LegendItem>
                    <LegendItem $c="#e67070" $gap={0}>高价天数: 1.00<Arrow /></LegendItem>
                  </Legend>
                </Pane>
                <Pane>
                  <VolumeChart />
                  <Legend>
                    <LegendItem $c={C.text} $gap={5}><Drop /></LegendItem>
                    <LegendItem $c="#d8d8d8" $gap={11}>VOLUME: 123832.98<Arrow down /></LegendItem>
                    <LegendItem $c="#d8d8d8" $gap={11}>MA5: 217747.97<Arrow down /></LegendItem>
                    <LegendItem $c="#e6e600" $gap={0}>MA10: 215754.56<Arrow /></LegendItem>
                  </Legend>
                </Pane>
                <DateAxis />
                <TabRow $h={25}>
                  {['指标', '窗口'].map(t => <Tab key={t}>{t}</Tab>)}
                  {['MACD', 'VOL-TDX', 'CCI'].map(t => <Tab key={t}><Latin>{t}</Latin></Tab>)}
                  {['趋势动力', '主力监控', '私募主图', 'MA2', '测试主图', '测试幅图A', '测试幅图B', '更多'].map(t => <Tab key={t}>{t}</Tab>)}
                  <Tab $c={C.cyan}>设置</Tab>
                  <Spacer />
                  <Tab>模板</Tab><ZoomIn>+</ZoomIn><ZoomOut>-</ZoomOut>
                </TabRow>
                <TabRow $h={27}>
                  <Tab>扩展<Caret>∧</Caret></Tab>
                  {['关联报价', '资金分布'].map(t => <Tab key={t}>{t}</Tab>)}
                  {['综合资讯', '行业资讯', '互动问答'].map(t => <Tab key={t} $c={C.yellow}>{t}</Tab>)}
                  <Tab>新用户福利专享</Tab>
                  <Spacer />
                  <Info $c={C.yellow}>图文F10</Info><SideTab $c={C.yellow}>侧边栏《</SideTab>
                </TabRow>
              </Charts>
              <Panel>
                <Title><Name>圣阳股份</Name><Code>002580</Code><Flag>R</Flag></Title>
                <Last><span>9.91</span><span>▲0.06</span><Percent>0.61%</Percent></Last>
                <Side>{ASKS.map(quote)}</Side>
                <Ratio />
                <Bids>{BIDS.map(quote)}</Bids>
                <Section $h={146} $foot={1}>{STATS.map(stat)}</Section>
                <Section $h={93} $foot={5}>{RATIOS.map(stat)}</Section>
                <Section $h={120} $foot={3}>
                  {FLOWS.map(([n, t, w, v, p]) => (
                    <FundRow key={t}>
                      <Label><B>{n}</B>{t}</Label><FlowBar style={{ width: w }} /><Figure t={v} c={C.green} /><Figure t={p} c={C.green} />
                    </FundRow>
                  ))}
                </Section>
                <Ticks>
                  <colgroup><col width="70" /><col width="88" /><col width="94" /><col width="46" /><col /></colgroup>
                  <tbody>
                    {TICKS.map((r, i) => (
                      <tr key={i}>
                        <td>{r[0]}</td><td><Figure t={r[1]} c={C.red} /></td>
                        <td><Figure t={`${r[2]}万`} c={Number(r[2]) > 50 ? C.magenta : C.yellow} /></td>
                        <td><Val $mid $c={r[3] === 'S' ? C.green : C.red}>{r[3] === '-' ? '' : r[3]}</Val></td>
                        <td>{r[4]}</td>
                      </tr>
                    ))}
                  </tbody>
                </Ticks>
                <PanelTabs>
                  <PanelTab as="button" $on>笔</PanelTab><PanelTab as="button">价</PanelTab><PanelTab as="button">细</PanelTab><PanelTab as="button">势</PanelTab>
                  <PanelTab /><PanelTab /><PanelTab /><PanelTab />
                </PanelTabs>
              </Panel>
            </Main>
            <Status>
              <svg width="20" height="20" viewBox="0 0 20 20"><rect x="1" y="1" width="18" height="18" rx="3" fill="#f8b830" stroke="#e09010" /><rect x="5" y="5" width="10" height="10" fill="#f8b830" stroke="#fff0c0" strokeWidth="2" /></svg>
              {INDICES.map(r => (
                <Index key={r[0]}><Thin>{r[0]}</Thin><Up $gap={9}>{r[1]}</Up><Up $gap={26}>{r[2]}</Up><Up $gap={24}>{r[3]}</Up><Amount>{r[4]}<Thin>亿</Thin></Amount></Index>
              ))}
              <Total><Thin>总成交</Thin><span>11150<Thin>亿</Thin></span></Total>
              <Broker>平安证券长沙行情</Broker>
            </Status>
          </Desk>
          <Strip>
            <Icons items={ICONS_TOP} h={486} />
            <Icons items={ICONS_MID} h={186} />
            <Icons items={ICONS_LOW} h={76} />
            <PeriodList>
              {['1', '5', '15', '30', '60', '日', '周', '月', 'N', '多', '季', '年'].map(t => <StripText key={t} $on={t === '日'}>{t}</StripText>)}
            </PeriodList>
          </Strip>
        </Body>
      </Page>
      <Stamp href="#">股票公式指标网<StampUrl>www.gszx.com.cn</StampUrl></Stamp>
    </Root>
  );
}
